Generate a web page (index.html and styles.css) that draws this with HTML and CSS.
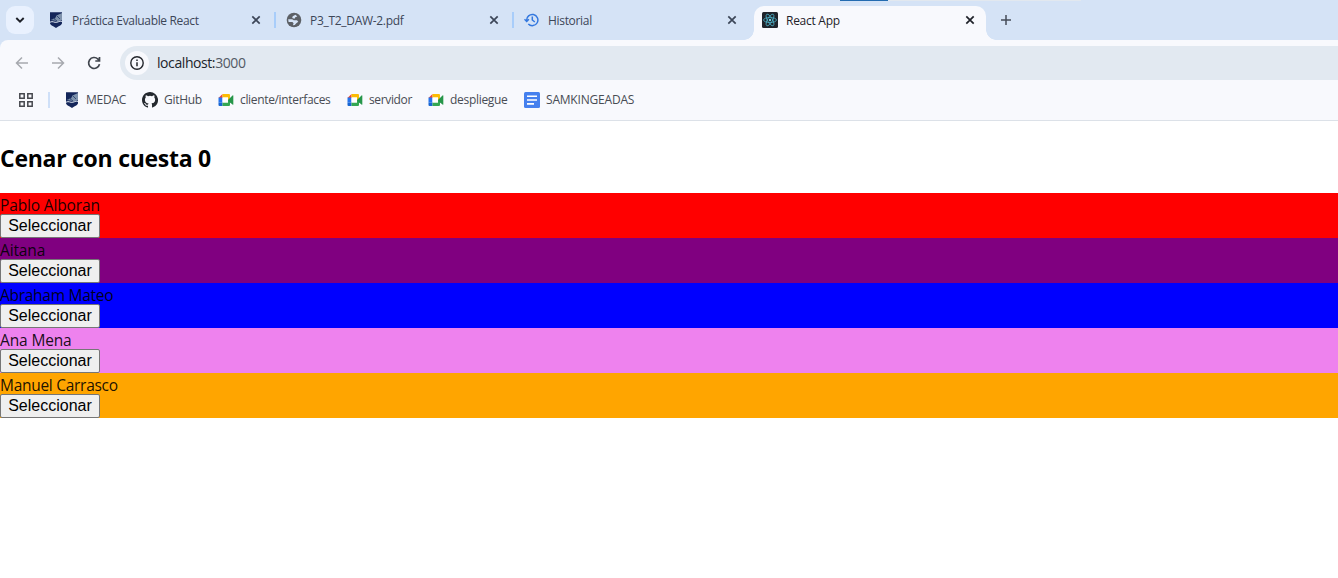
FILE: index.html
```html
<!DOCTYPE html>
<html lang="es">
<head>
<meta charset="utf-8">
<title>React App</title>
<link rel="stylesheet" href="styles.css">
</head>
<body>
<svg class="defs" width="0" height="0" aria-hidden="true">
  <symbol id="close" viewBox="0 0 10 10"><path d="M1.3 1.3 8.7 8.7M8.7 1.3 1.3 8.7" fill="none" stroke="currentColor" stroke-width="1.7"/></symbol>
  <symbol id="shield" viewBox="0 0 16 16"><path d="M2 .3h12v10.700c0 2.200-2.800 2.500-6 5-3.200-2.500-6-2.800-6-5z" fill="#14265a"/><path d="M2.500 8 7 6.500l1.500-3L14 1v7L9.500 9.500 6 8.500z" fill="#7e92ac"/><path d="M2 10.200c3-1.600 4 .8 7 0s3-1.300 5-.8" fill="none" stroke="#dfe8f2" stroke-width="1"/><path d="m5 6 4 3M9 4l3 3" stroke="#344b75" fill="none"/></symbol>
  <symbol id="meet" viewBox="0 0 16 14"><path d="M.5 5 4.500 1v4z" fill="#ea4335"/><path d="M.5 4.500h4v5h-4z" fill="#2674ec"/><path d="M.5 9.500h4V13H1.500q-1 0-1-1z" fill="#1765d2"/><path d="M4.500 1H11q1 0 1 1v5h-2V4.500H4.500z" fill="#fbbc04"/><path d="M4.500 9.500H10V7h2v5q0 1-1 1H4.500z" fill="#34a853"/><path d="m10 7 4.500-4.500q.8-.6.800.3v8.400q0 .9-.8.300L12 9.500z" fill="#26964a"/><path d="M4.500 4.500H10v5H4.500z" fill="#fff"/></symbol>
</svg>
<header class="browser">
  <div class="tabs">
    <div class="load"></div>
    <button class="search-tabs" aria-label="Buscar pestañas"><svg width="10" height="8" viewBox="0 0 10 8"><path d="m1.300 2 3.700 3.700L8.700 2" fill="none" stroke="#1d2028" stroke-width="1.900"/></svg></button>
    <div class="tab first"><svg class="fav" viewBox="0 0 16 16"><use href="#shield"/></svg><span class="t-practica">Práctica Evaluable React</span><svg class="x"><use href="#close"/></svg></div>
    <div class="tab"><svg class="fav" viewBox="0 0 16 16"><circle cx="8" cy="8" r="7.300" fill="#5c6066"/><path d="M9.500 2.800 6.700 4.200 6.200 6l2.300.8.800-1.500 2-.7zM2.200 7.300h4l1.500 1h3.300l1.300 1.500-2 1.500-1.500 1.700-1.900.2.700-2-1.200-1.300H2.600z" fill="#d6e4f7"/></svg><span class="t-pdf">P3_T2_DAW-2.pdf</span><svg class="x"><use href="#close"/></svg></div>
    <div class="tab last"><svg class="fav" viewBox="0 0 16 16"><path d="M2.700 8.500A5.600 5.600 0 1 1 4.300 12M.5 7.300l2.200 2.200 2.200-2.200M8.300 4.500V8l2.500 2" fill="none" stroke="#3478df" stroke-width="1.500"/></svg><span class="t-hist">Historial</span><svg class="x"><use href="#close"/></svg></div>
    <div class="tab active"><svg class="fav" viewBox="0 0 16 16"><rect width="16" height="16" rx="1.500" fill="#20242b"/><g fill="none" stroke="#4dafc5" stroke-width=".8"><ellipse cx="8" cy="8" rx="6.500" ry="2.500"/><ellipse cx="8" cy="8" rx="6.500" ry="2.500" transform="rotate(60 8 8)"/><ellipse cx="8" cy="8" rx="6.500" ry="2.500" transform="rotate(120 8 8)"/></g><circle cx="8" cy="8" r="1.200" fill="#71d5e8"/></svg><span class="t-react">React App</span><svg class="x"><use href="#close"/></svg></div>
    <svg class="plus" viewBox="0 0 10 10"><path d="M5 0v10M0 5h10" stroke="#454c58" stroke-width="1.500"/></svg>
  </div>
  <div class="toolbar">
    <svg class="nav" viewBox="0 0 16 16"><path d="M14 8H2.500M8 2.500 2.500 8 8 13.500" fill="none" stroke="#a6a9af" stroke-width="1.500"/></svg>
    <svg class="nav" viewBox="0 0 16 16"><path d="M2 8h11.500M8 2.500 13.500 8 8 13.500" fill="none" stroke="#a6a9af" stroke-width="1.500"/></svg>
    <svg class="nav" viewBox="0 0 16 16"><path d="M13.500 9.100A5.500 5.500 0 1 1 12 4.100l1.500 1.700M13.500 2v4H9.300" fill="none" stroke="#41464e" stroke-width="1.700"/></svg>
    <div class="address"><span class="info"><svg width="16" height="16" viewBox="0 0 16 16"><circle cx="8" cy="8" r="6.200" fill="none" stroke="#24272d" stroke-width="1.400"/><path d="M8 7.200v4M8 4.500V6" stroke="#24272d" stroke-width="1.500"/></svg></span><span class="url">localhost:<span>3000</span></span></div>
  </div>
  <nav class="bookmarks">
    <svg class="apps" viewBox="0 0 14 14"><path d="M.8.800h4.400v4.400H.8zM8.800.8h4.400v4.400H8.800zM.8 8.800h4.400v4.400H.8zM8.800 8.800h4.400v4.400H8.800z" fill="none" stroke="#46484e" stroke-width="1.500"/></svg>
    <i class="divider"></i>
    <div class="mark medac"><svg class="fav" viewBox="0 0 16 16"><use href="#shield"/></svg><span>MEDAC</span></div>
    <div class="mark github"><svg class="fav" viewBox="0 0 16 16"><path fill="#24292f" d="M8 0C3.580 0 0 3.580 0 8c0 3.540 2.290 6.530 5.470 7.590.4.070.55-.17.55-.38v-1.490c-2.010.37-2.530-.49-2.690-.94-.09-.23-.48-.94-.82-1.130-.28-.15-.68-.52-.01-.53.63-.01 1.080.58 1.230.82.72 1.210 1.870.87 2.330.66.070-.52.28-.87.51-1.070-1.780-.2-3.640-.89-3.640-3.950 0-.87.31-1.590.82-2.150-.08-.2-.36-1.020.08-2.120 0 0 .67-.21 2.200.82a7.600 7.600 0 0 1 4 0c1.530-1.040 2.200-.82 2.200-.82.44 1.100.16 1.920.08 2.120.51.56.82 1.270.82 2.150 0 3.070-1.870 3.750-3.650 3.950.29.25.54.73.54 1.480v2.200c0 .21.15.46.55.38A8 8 0 0 0 8 0z"/></svg><span>GitHub</span></div>
    <div class="mark cliente"><svg class="fav" viewBox="0 0 16 14"><use href="#meet"/></svg><span>cliente/interfaces</span></div>
    <div class="mark servidor"><svg class="fav" viewBox="0 0 16 14"><use href="#meet"/></svg><span>servidor</span></div>
    <div class="mark despliegue"><svg class="fav" viewBox="0 0 16 14"><use href="#meet"/></svg><span>despliegue</span></div>
    <div class="mark sam"><svg class="fav" viewBox="0 0 16 16"><rect width="16" height="16" rx="1.500" fill="#4580ee"/><path d="M3 4.200h10M3 8h10M3 11.900h7" stroke="#fff" stroke-width="1.600"/></svg><span>SAMKINGEADAS</span></div>
  </nav>
</header>
<main>
  <h2>Cenar con cuesta 0</h2>
  <section class="artist red"><div>Pablo Alboran</div><button>Seleccionar</button></section>
  <section class="artist purple"><div>Aitana</div><button>Seleccionar</button></section>
  <section class="artist blue"><div class="wide-name">Abraham Mateo</div><button>Seleccionar</button></section>
  <section class="artist violet"><div>Ana Mena</div><button>Seleccionar</button></section>
  <section class="artist orange"><div class="wide-name">Manuel Carrasco</div><button>Seleccionar</button></section>
</main>
</body>
</html>
```
FILE: styles.css
```css
* { box-sizing: border-box; }
body { margin: 0; background: #fff; color: #000; font-family: "Open Sans", "Noto Sans", sans-serif; overflow: hidden; }
.defs { position: absolute; }
.browser { height: 121px; background: #f8f9fd; border-bottom: 1px solid #dce1e8; font-size: 12px; white-space: nowrap; }
.tabs { height: 40px; display: flex; background: #d5e3f6; padding: 6px 0 0 6px; position: relative; }
.load { position: absolute; top: 0; left: 840px; width: 241px; height: 1px; background: linear-gradient(to right, #236bb0 48px, #e2e8ef 48px); }
.search-tabs { width: 28px; height: 28px; padding: 0; border: 0; border-radius: 9px; background: #e9f1fe; display: grid; place-items: center; }
.tab { width: 238px; height: 28px; display: flex; align-items: center; padding: 0 14px 0 11px; color: #3c4658; position: relative; }
.tab.first { width: 241px; padding-left: 14px; }
.tab:not(.active):not(.last)::after { content: ""; position: absolute; right: -1px; top: 6px; width: 2px; height: 16px; background: #a8cdfa; }
.tab.last { width: 241px; padding-right: 17px; }
.fav { width: 16px; height: 16px; flex: none; margin-right: 8px; }
.x { width: 10px; height: 10px; margin-left: auto; flex: none; color: #3c4658; }
.tab.active { width: 232px; height: 34px; padding: 0 11px 6px 8px; background: #f8f9fd; border-radius: 10px 10px 0 0; color: #1f2229; }
.tab.active .x { color: #1f2229; }
.tab.active::before, .tab.active::after { content: ""; position: absolute; bottom: 0; width: 10px; height: 10px; }
.tab.active::before { left: -10px; background: radial-gradient(circle at 0 0, transparent 9.5px, #f8f9fd 10px); }
.tab.active::after { right: -10px; background: radial-gradient(circle at 100% 0, transparent 9.5px, #f8f9fd 10px); }
.plus { width: 10px; height: 10px; margin: 9px 0 0 15px; }
.t-practica { letter-spacing: -.34px; }
.t-pdf { letter-spacing: -.3px; }
.t-hist { letter-spacing: -.32px; }
.t-react { letter-spacing: -.27px; }
.toolbar { display: flex; height: 40px; padding: 6px 0 0 14px; align-items: center; background: #f8f9fd; border-radius: 8px 0 0; box-shadow: -8px -8px 0 #d5e3f6; clip-path: inset(0); }
.nav { width: 16px; height: 16px; margin-right: 20px; flex: none; }
.address { flex: 1; height: 34px; margin-left: -2px; border-radius: 17px 0 0 17px; background: #e2e9f1; display: flex; align-items: center; padding-left: 5px; }
.info { width: 24px; height: 24px; border-radius: 12px; background: #f8f9fd; display: grid; place-items: center; }
.url { margin-left: 8px; font-size: 14px; line-height: 18px; padding-bottom: 1px; letter-spacing: -.42px; color: #20242b; }
.url span { color: #535a65; }
.bookmarks { height: 40px; display: flex; align-items: center; padding-left: 19px; color: #484c54; }
.apps { width: 14px; height: 14px; margin-right: 15px; }
.divider { width: 2px; height: 16px; background: #cfe0f8; margin-right: 14px; }
.mark { display: flex; align-items: center; flex: none; }
.mark .fav { margin-right: 6px; }
.mark > span { padding-bottom: 1px; }
.medac { width: 78px; letter-spacing: -.25px; }
.github { width: 76px; letter-spacing: -.3px; }
.cliente { width: 129px; letter-spacing: -.34px; }
.servidor { width: 81px; letter-spacing: -.36px; }
.despliegue { width: 96px; letter-spacing: -.3px; }
.sam { letter-spacing: -.2px; }
h2 { font-size: 23px; line-height: 32px; font-weight: 700; margin: 0; padding-top: 21px; height: 72px; letter-spacing: -.27px; }
.artist { height: 45px; font-size: 15.5px; color: rgba(0, 0, 0, .9); }
.artist > div { height: 21px; line-height: 22px; padding-top: 1px; letter-spacing: -.14px; white-space: nowrap; }
.artist > .wide-name { letter-spacing: -.28px; }
.artist button { display: block; width: 100px; height: 24px; padding: 0; font: 16px/20px "Liberation Sans", Arial, sans-serif; color: #000; background: #efefef; border: 1px solid #767676; border-radius: 2px; }
.red { background: red; }
.purple { background: purple; }
.blue { background: blue; }
.violet { background: violet; }
.orange { background: orange; }
```
